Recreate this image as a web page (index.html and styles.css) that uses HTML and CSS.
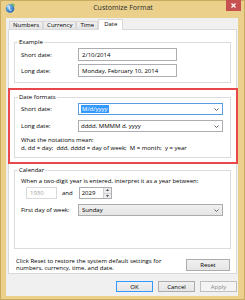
FILE: index.html
```html
<!DOCTYPE html>
<html lang="en">
<head>
    <meta charset="UTF-8">
    <title>Customize Format</title>
    <link rel="stylesheet" href="styles.css">
</head>
<body>
    <div class="window">
        <div class="titlebar">
            <svg class="app-icon" width="10" height="10" viewBox="0 0 10 10">
                <defs>
                    <radialGradient id="globe" cx="35%" cy="30%" r="75%">
                        <stop offset="0" stop-color="#8cc8f5"/>
                        <stop offset="1" stop-color="#1f64b4"/>
                    </radialGradient>
                </defs>
                <circle cx="5" cy="5.5" r="4.3" fill="url(#globe)"/>
                <path d="M2.2 3.5 C3.5 2.2 5 3.8 4.2 5 C3.6 6 4.8 7.6 6.4 7.2" fill="none" stroke="#fff" stroke-width="1"/>
                <path d="M6 1.2 L8.8 1.2 L8.8 3.6" fill="none" stroke="#4caf50" stroke-width="1"/>
            </svg>
            <div class="title">Customize Format</div>
            <div class="close">
                <svg width="5" height="5" viewBox="0 0 5 5">
                    <path d="M0.5 0.5 L4.5 4.5 M4.5 0.5 L0.5 4.5" stroke="#fff" stroke-width="1.2"/>
                </svg>
            </div>
        </div>

        <div class="client">
            <div class="tabs">
                <div class="tab">Numbers</div>
                <div class="tab">Currency</div>
                <div class="tab">Time</div>
                <div class="tab active">Date</div>
            </div>

            <div class="panel">
                <fieldset class="group example">
                    <legend>Example</legend>
                    <div class="row">
                        <label>Short date:</label>
                        <div class="textbox">2/10/2014</div>
                    </div>
                    <div class="row">
                        <label>Long date:</label>
                        <div class="textbox">Monday, February 10, 2014</div>
                    </div>
                </fieldset>

                <div class="highlight">
                    <fieldset class="group formats">
                        <legend>Date formats</legend>
                        <div class="row">
                            <label>Short date:</label>
                            <div class="combo focus">
                                <span class="sel">M/d/yyyy</span>
                                <svg class="arrow" width="5" height="3" viewBox="0 0 5 3"><path d="M0.5 0.5 L2.5 2.5 L4.5 0.5" fill="none" stroke="#555" stroke-width="0.9"/></svg>
                            </div>
                        </div>
                        <div class="row">
                            <label>Long date:</label>
                            <div class="combo">
                                <span>dddd, MMMM d, yyyy</span>
                                <svg class="arrow" width="5" height="3" viewBox="0 0 5 3"><path d="M0.5 0.5 L2.5 2.5 L4.5 0.5" fill="none" stroke="#555" stroke-width="0.9"/></svg>
                            </div>
                        </div>
                        <p class="note">What the notations mean:<br>d, dd = day;&nbsp; ddd, dddd = day of week;&nbsp; M = month;&nbsp; y = year</p>
                    </fieldset>
                </div>

                <fieldset class="group calendar">
                    <legend>Calendar</legend>
                    <p class="hint">When a two-digit year is entered, interpret it as a year between:</p>
                    <div class="years">
                        <div class="textbox year-from">1930</div>
                        <span class="and">and</span>
                        <div class="spin">
                            <span>2029</span>
                            <div class="spin-btns">
                                <div class="spin-btn"><svg width="3" height="2" viewBox="0 0 3 2"><path d="M0 2 L1.5 0 L3 2 Z" fill="#444"/></svg></div>
                                <div class="spin-btn"><svg width="3" height="2" viewBox="0 0 3 2"><path d="M0 0 L1.5 2 L3 0 Z" fill="#444"/></svg></div>
                            </div>
                        </div>
                    </div>
                    <div class="row week">
                        <label>First day of week:</label>
                        <div class="combo list">
                            <span>Sunday</span>
                            <svg class="arrow" width="5" height="3" viewBox="0 0 5 3"><path d="M0.5 0.5 L2.5 2.5 L4.5 0.5" fill="none" stroke="#555" stroke-width="0.9"/></svg>
                        </div>
                    </div>
                </fieldset>

                <div class="reset-row">
                    <p>Click Reset to restore the system default settings for<br>numbers, currency, time, and date.</p>
                    <button class="reset">Reset</button>
                </div>
            </div>

            <div class="buttons">
                <button class="default">OK</button>
                <button>Cancel</button>
                <button disabled>Apply</button>
            </div>
        </div>
    </div>
</body>
</html>
```

FILE: styles.css
```css
* {
    box-sizing: border-box;
}
body {
    margin: 0;
    font-family: "Open Sans", "Liberation Sans", sans-serif;
    font-size: 6px;
    color: #000;
}
.window {
    width: 245px;
    height: 300px;
    display: flex;
    flex-direction: column;
    background: #ebd08b;
    border: 1px solid #c9aa5e;
}
.titlebar {
    height: 17px;
    display: grid;
    grid-template-columns: 1fr auto 1fr;
    align-items: start;
    padding: 0 3px 0 4px;
}
.app-icon {
    margin-top: 2px;
}
.title {
    font-size: 7px;
    line-height: 9px;
    margin-top: 2px;
    color: #2b2b2b;
}
.close {
    justify-self: end;
    width: 15px;
    height: 11px;
    margin-top: -1px;
    background: #c75050;
    display: flex;
    align-items: center;
    justify-content: center;
}
.client {
    flex: 1;
    margin: 0 6px 3px 5px;
    background: #f0f0f0;
    padding: 1px 1px 4px 2px;
    display: flex;
    flex-direction: column;
}
.tabs {
    display: flex;
    align-items: flex-end;
    height: 11px;
    padding-left: 1px;
    margin-bottom: -1px;
}
.tab {
    height: 8px;
    margin-bottom: 1px;
    padding: 0 3px;
    line-height: 7px;
    border: 1px solid #d9d9d9;
    border-bottom: none;
    background: linear-gradient(#f0f0f0, #e5e5e5);
}
.tab.active {
    height: 11px;
    margin-bottom: 0;
    padding: 1px 5px 0;
    background: #fff;
    position: relative;
    z-index: 1;
}
.panel {
    flex: 1;
    background: #fff;
    border: 1px solid #d9d9d9;
    padding: 8px 5px 0 5px;
    display: flex;
    flex-direction: column;
}
.group {
    margin: 0;
    min-width: 0;
    border: 1px solid #dcdcdc;
    padding: 1px 7px 5px 6px;
}
.group legend {
    padding: 0 1px;
    margin-left: -3px;
    line-height: 9px;
}
.row {
    display: flex;
    align-items: center;
}
.row + .row {
    margin-top: 3px;
}
.row label {
    width: 57px;
    flex: none;
}
.textbox {
    width: 99px;
    height: 13px;
    border: 1px solid #abadb3;
    background: #fff;
    padding-left: 3px;
    display: flex;
    align-items: center;
}
.highlight {
    margin: 5px -7px 2px -6px;
    border: 2px solid #e8474c;
    padding: 3px 5px 4px 4px;
}
.formats .row + .row {
    margin-top: 5px;
}
.combo {
    width: 145px;
    height: 12px;
    border: 1px solid #abadb3;
    background: #fff;
    padding: 0 3px 0 2px;
    display: flex;
    align-items: center;
    justify-content: space-between;
}
.combo.focus {
    border-color: #569de5;
}
.combo.list {
    padding-left: 3px;
    border-color: #acacac;
    background: linear-gradient(#f0f0f0, #e5e5e5);
}
.sel {
    background: #3399ff;
    color: #fff;
    padding: 0 1px;
    line-height: 8px;
}
.note {
    margin: 5px 0 0;
    line-height: 7.5px;
}
.calendar {
    padding-bottom: 32px;
}
.hint {
    margin: 2px 0 0;
    line-height: 7px;
}
.years {
    display: flex;
    align-items: center;
    margin-top: 2px;
    padding-left: 5px;
}
.year-from {
    width: 31px;
    height: 12px;
    border-color: #d9d9d9;
    color: #a0a0a0;
}
.and {
    margin: 0 6px 0 5px;
}
.spin {
    width: 33px;
    height: 12px;
    border: 1px solid #abadb3;
    padding-left: 2px;
    display: flex;
    align-items: center;
    justify-content: space-between;
}
.spin-btns {
    width: 8px;
    height: 100%;
    display: flex;
    flex-direction: column;
}
.spin-btn {
    flex: 1;
    display: flex;
    align-items: center;
    justify-content: center;
    background: #ececec;
    border-left: 1px solid #d0d0d0;
}
.spin-btn + .spin-btn {
    border-top: 1px solid #d0d0d0;
}
.week {
    margin-top: 5px;
}
.reset-row {
    display: flex;
    justify-content: space-between;
    align-items: center;
    margin-top: 8px;
    padding: 0 1px 0 2px;
}
.reset-row p {
    margin: 1px 0 0;
    line-height: 7px;
}
button {
    width: 37px;
    height: 11px;
    padding: 0;
    font-family: inherit;
    font-size: 6px;
    color: #000;
    border: 1px solid #acacac;
    background: linear-gradient(#f0f0f0, #e5e5e5);
}
button.reset {
    width: 44px;
    height: 12px;
}
button.default {
    border-color: #3399ff;
}
button:disabled {
    color: #8a8a8a;
    border-color: #bfbfbf;
    background: #f4f4f4;
}
.buttons {
    display: flex;
    justify-content: flex-end;
    gap: 5px;
    margin-top: 7px;
}
```
